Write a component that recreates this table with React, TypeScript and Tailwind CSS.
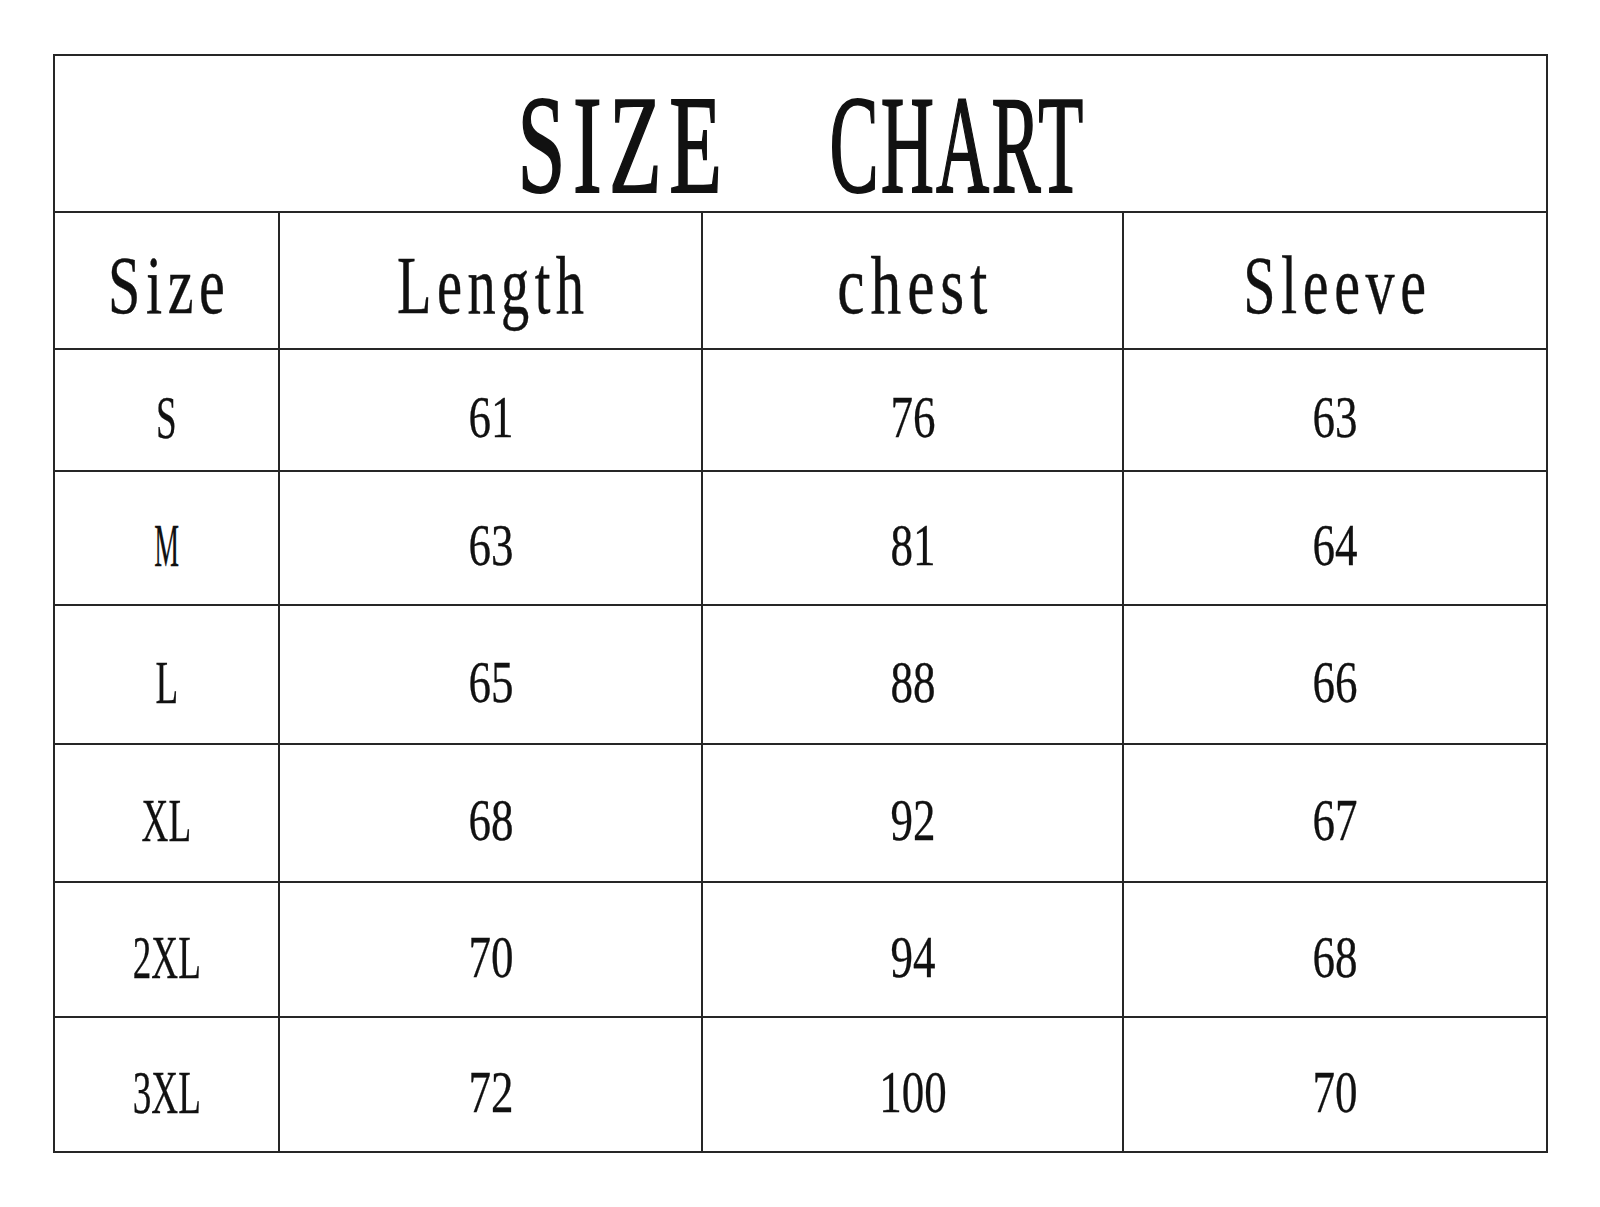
import React from "react";

type Row = { size: string; sizeScale?: string; length: string; chest: string; sleeve: string; h: string };

const rows: Row[] = [
  { size: "S", length: "61", chest: "76", sleeve: "63", h: "h-[122px]" },
  { size: "M", sizeScale: "scale-x-[0.45]", length: "63", chest: "81", sleeve: "64", h: "h-[134px]" },
  { size: "L", length: "65", chest: "88", sleeve: "66", h: "h-[139px]" },
  { size: "XL", length: "68", chest: "92", sleeve: "67", h: "h-[138px]" },
  { size: "2XL", length: "70", chest: "94", sleeve: "68", h: "h-[135px]" },
  { size: "3XL", length: "72", chest: "100", sleeve: "70", h: "h-[135px]" },
];

function Cell({ children, first, scale, pad, text }: { children: React.ReactNode; first?: boolean; scale: string; pad: string; text: string }) {
  return (
    <div className={`flex items-center justify-center ${pad} ${first ? "" : "border-l-2 border-[#262626]"}`}>
      <span className={`inline-block whitespace-nowrap leading-none text-[#111] ${text} ${scale}`}>{children}</span>
    </div>
  );
}

const head = "text-[83px] tracking-[8px] pl-[8px] [-webkit-text-stroke:0.4px_#111]";

export default function App() {
  return (
    <div className="w-[1600px] h-[1207px] bg-white pt-[54px] pl-[53px] font-['Liberation_Serif',serif]">
      <div className="w-[1495px] h-[1099px] border-2 border-[#262626] flex flex-col">
        <div className="h-[155px] flex items-center justify-center gap-[107px] pt-[23px]">
          <div className="w-[204px] flex justify-center">
            <span className="inline-block whitespace-nowrap leading-none text-[139px] text-[#111] tracking-[12px] pl-[12px] scale-x-[0.62] [-webkit-text-stroke:2px_#111]">SIZE</span>
          </div>
          <div className="w-[255px] flex justify-center">
            <span className="inline-block whitespace-nowrap leading-none text-[139px] text-[#111] tracking-[4px] pl-[4px] scale-x-[0.53] [-webkit-text-stroke:2px_#111]">CHART</span>
          </div>
        </div>
        <div className="h-[137px] grid grid-cols-[223px_423px_421px_424px] border-t-2 border-[#262626]">
          <Cell first scale="scale-x-[0.7]" pad="pt-[10px]" text={head}>Size</Cell>
          <Cell scale="scale-x-[0.68]" pad="pt-[10px]" text={head}>Length</Cell>
          <Cell scale="scale-x-[0.74]" pad="pt-[10px]" text={head}>chest</Cell>
          <Cell scale="scale-x-[0.7]" pad="pt-[10px]" text={head}>Sleeve</Cell>
        </div>
        {rows.map((r) => (
          <div key={r.size} className={`${r.h} grid grid-cols-[223px_423px_421px_424px] border-t-2 border-[#262626]`}>
            <Cell first scale={r.sizeScale ?? "scale-x-[0.6]"} pad="pt-[14px]" text="text-[62px] [-webkit-text-stroke:0.3px_#111]">{r.size}</Cell>
            <Cell scale="scale-x-[0.75]" pad="pt-[14px]" text="text-[60px] [-webkit-text-stroke:0.3px_#111]">{r.length}</Cell>
            <Cell scale="scale-x-[0.75]" pad="pt-[14px]" text="text-[60px] [-webkit-text-stroke:0.3px_#111]">{r.chest}</Cell>
            <Cell scale="scale-x-[0.75]" pad="pt-[14px]" text="text-[60px] [-webkit-text-stroke:0.3px_#111]">{r.sleeve}</Cell>
          </div>
        ))}
      </div>
    </div>
  );
}
